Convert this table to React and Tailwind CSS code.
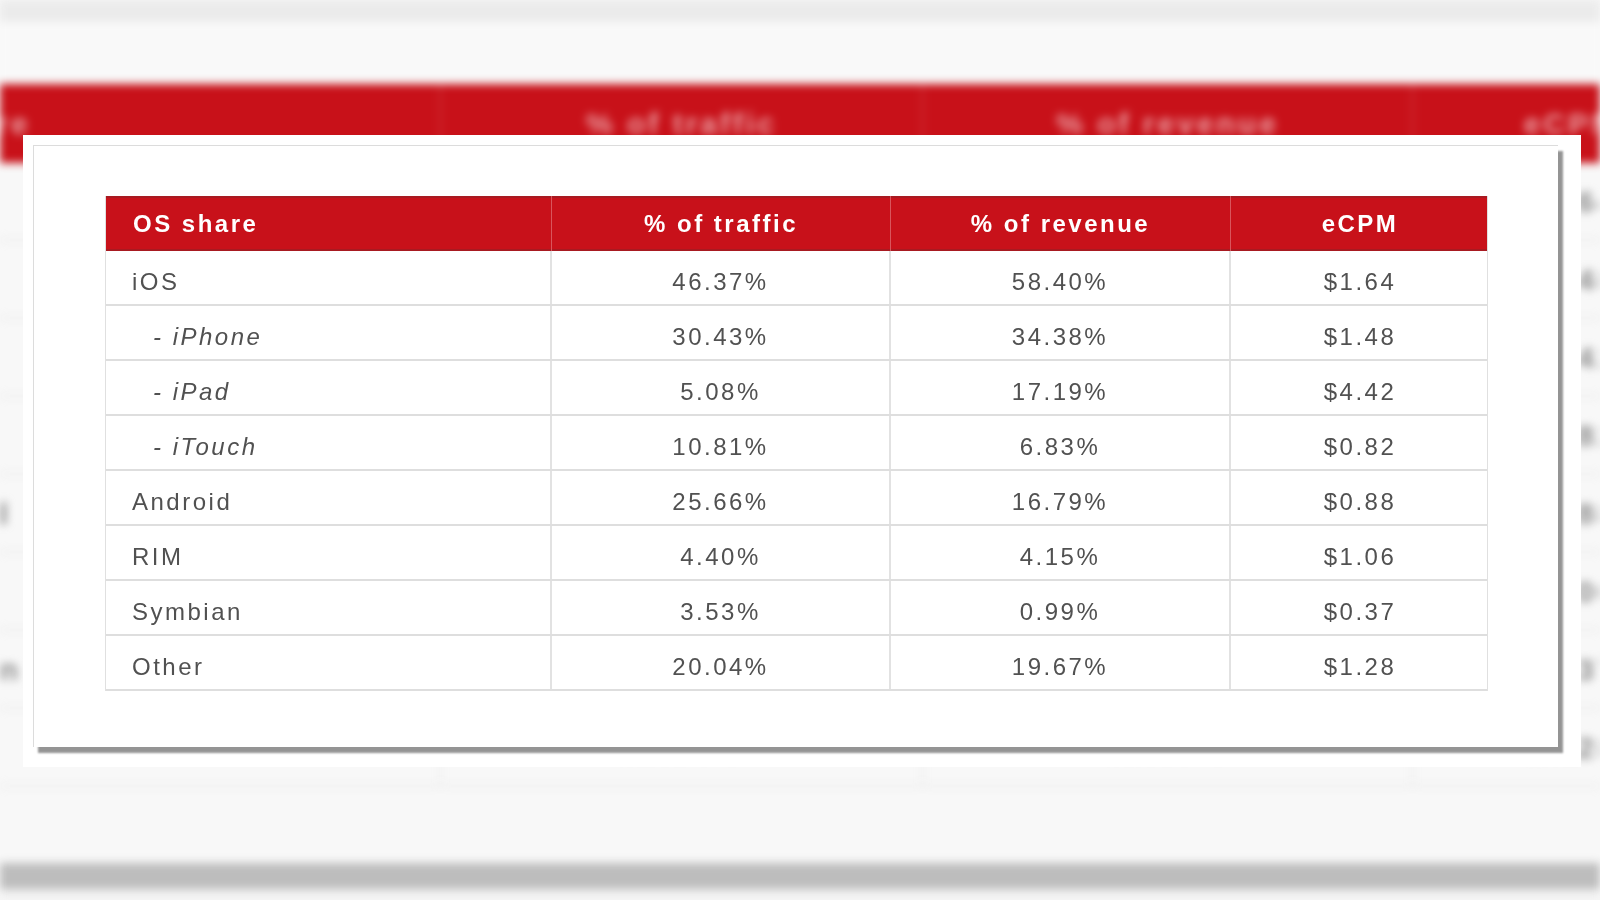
import React from 'react';

const rows = [
  { os: 'iOS', traffic: '46.37%', revenue: '58.40%', ecpm: '$1.64' },
  { os: '- iPhone', traffic: '30.43%', revenue: '34.38%', ecpm: '$1.48', sub: true },
  { os: '- iPad', traffic: '5.08%', revenue: '17.19%', ecpm: '$4.42', sub: true },
  { os: '- iTouch', traffic: '10.81%', revenue: '6.83%', ecpm: '$0.82', sub: true },
  { os: 'Android', traffic: '25.66%', revenue: '16.79%', ecpm: '$0.88' },
  { os: 'RIM', traffic: '4.40%', revenue: '4.15%', ecpm: '$1.06' },
  { os: 'Symbian', traffic: '3.53%', revenue: '0.99%', ecpm: '$0.37' },
  { os: 'Other', traffic: '20.04%', revenue: '19.67%', ecpm: '$1.28' },
];

// blurred copy of the same table, seen behind the photo
function BackdropTable() {
  return (
    <div className="ml-[-155px] w-[1880px]">
      <div className="grid grid-cols-[596px_482px_490px_317px] h-[79px] bg-[#c81119] shadow-[0_-6px_6px_rgba(200,17,25,0.35)] text-[#eaa0a4] font-bold text-[30px] tracking-[3px]">
        <div className="flex items-center pl-[30px] border-r border-[#d8545a]">OS share</div>
        <div className="flex items-center justify-center border-r border-[#d8545a]">% of traffic</div>
        <div className="flex items-center justify-center border-r border-[#d8545a]">% of revenue</div>
        <div className="flex items-center justify-center">eCPM</div>
      </div>
      {rows.map((r) => (
        <div key={r.os} className="grid grid-cols-[596px_482px_490px_317px] h-[78px] border-b-2 border-[#e8e8e8] text-[#8a8a8a] font-bold text-[30px] tracking-[3px]">
          <div className="flex items-center pl-[30px] border-r border-[#e4e4e4]">{r.os.replace('- ', '')}</div>
          <div className="flex items-center justify-center border-r border-[#e4e4e4]">{r.traffic}</div>
          <div className="flex items-center justify-center border-r border-[#e4e4e4]">{r.revenue}</div>
          <div className="flex items-center justify-center">{r.ecpm}</div>
        </div>
      ))}
    </div>
  );
}

export default function App() {
  return (
    <div
      className="relative w-[1600px] h-[900px] overflow-hidden bg-[#f8f8f8]"
      style={{ fontFamily: '"Liberation Sans", Arial, sans-serif' }}
    >
      <div className="flex flex-col h-full blur-[4px]">
        <div className="h-[22px] bg-[#ebebeb]" />
        <div className="h-[62px] bg-[#f9f9f9]" />
        <div className="h-[779px] overflow-hidden">
          <BackdropTable />
        </div>
        <div className="h-[26px] bg-[#bdbdbd]" />
        <div className="h-[11px] bg-[#f1f1f1]" />
      </div>

      <div className="absolute left-[23px] top-[135px] w-[1558px] h-[632px] bg-white pl-[10px] pt-[10px] blur-[0.5px]">
        <div className="w-[1525px] h-[602px] bg-white border-l border-t border-[#dcdcdc] shadow-[5px_6px_2px_rgba(0,0,0,0.42)] pl-[71px] pt-[50px]">
          <div className="w-[1383px] border-x border-[#e0e0e0]">
            <div className="grid grid-cols-[446px_339px_340px_258px] h-[55px] bg-[#c8111a] shadow-[inset_0_2px_0_#a81a21,inset_0_-2px_0_#a81a21] text-white font-bold text-[24px] tracking-[2.5px]">
              <div className="flex items-center pl-[27px] border-r border-[#d9555c]">OS share</div>
              <div className="flex items-center justify-center border-r border-[#d9555c]">% of traffic</div>
              <div className="flex items-center justify-center border-r border-[#d9555c]">% of revenue</div>
              <div className="flex items-center justify-center">eCPM</div>
            </div>
            {rows.map((r) => (
              <div
                key={r.os}
                className="grid grid-cols-[446px_339px_340px_258px] h-[55px] border-b-2 border-[#dedede] text-[#515151] text-[24px] tracking-[2.5px]"
              >
                <div className={`flex items-center pt-[8px] border-r-2 border-[#e2e2e2] ${r.sub ? 'pl-[47px] italic' : 'pl-[26px]'}`}>{r.os}</div>
                <div className="flex items-center justify-center pt-[8px] border-r-2 border-[#e2e2e2]">{r.traffic}</div>
                <div className="flex items-center justify-center pt-[8px] border-r-2 border-[#e2e2e2]">{r.revenue}</div>
                <div className="flex items-center justify-center pt-[8px]">{r.ecpm}</div>
              </div>
            ))}
          </div>
        </div>
      </div>
    </div>
  );
}
